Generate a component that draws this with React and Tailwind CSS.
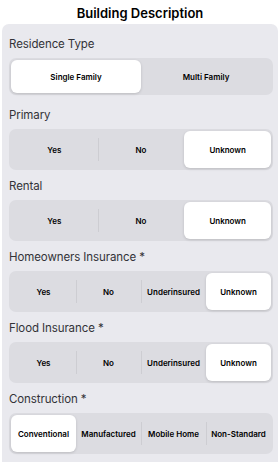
import React from "react";

const sections = [
  { label: "Residence Type", options: ["Single Family", "Multi Family"], selected: 0, h: "h-[37px]", gap: "mb-[12px]" },
  { label: "Primary", options: ["Yes", "No", "Unknown"], selected: 2 },
  { label: "Rental", options: ["Yes", "No", "Unknown"], selected: 2 },
  { label: "Homeowners Insurance *", options: ["Yes", "No", "Underinsured", "Unknown"], selected: 3 },
  { label: "Flood Insurance *", options: ["Yes", "No", "Underinsured", "Unknown"], selected: 3 },
  { label: "Construction *", options: ["Conventional", "Manufactured", "Mobile Home", "Non-Standard"], selected: 0 },
];

function Segmented({ options, selected, h }) {
  return (
    <div className={`flex ${h || "h-[41px]"} rounded-[7px] bg-[#dcdce1] p-[2px]`}>
      {options.map((opt, i) => {
        const active = i === selected;
        const showDivider = i > 0 && i !== selected && i - 1 !== selected;
        return (
          <div key={opt} className="relative flex-1 flex">
            {showDivider && (
              <div className="absolute left-0 top-[7px] bottom-[7px] w-px bg-[#cdcdd2]" />
            )}
            <div
              className={`flex-1 flex items-center justify-center rounded-[6px] text-[8px] font-semibold text-black whitespace-nowrap ${
                active ? "bg-white shadow-[0_1px_3px_rgba(0,0,0,0.15)]" : ""
              }`}
            >
              {opt}
            </div>
          </div>
        );
      })}
    </div>
  );
}

export default function App() {
  return (
    <div
      className="w-[280px] h-[462px] bg-white overflow-hidden flex flex-col"
      style={{ fontFamily: "Inter, 'Liberation Sans', sans-serif" }}
    >
      <div className="h-[24px] flex items-end justify-center pb-[2px]">
        <h1 className="text-[13px] leading-[18px] font-semibold text-black">Building Description</h1>
      </div>
      <div className="mx-[2px] flex-1 rounded-t-[7px] bg-[#e9e9ee] pt-[12px] pl-[7px] pr-[5px]">
        {sections.map((s) => (
          <div key={s.label} className={s.gap || "mb-[8px]"}>
            <div className="h-[16px] leading-[16px] text-[11.5px] tracking-[-0.1px] text-[#333338] mb-[6px]">{s.label}</div>
            <Segmented options={s.options} selected={s.selected} h={s.h} />
          </div>
        ))}
      </div>
    </div>
  );
}
